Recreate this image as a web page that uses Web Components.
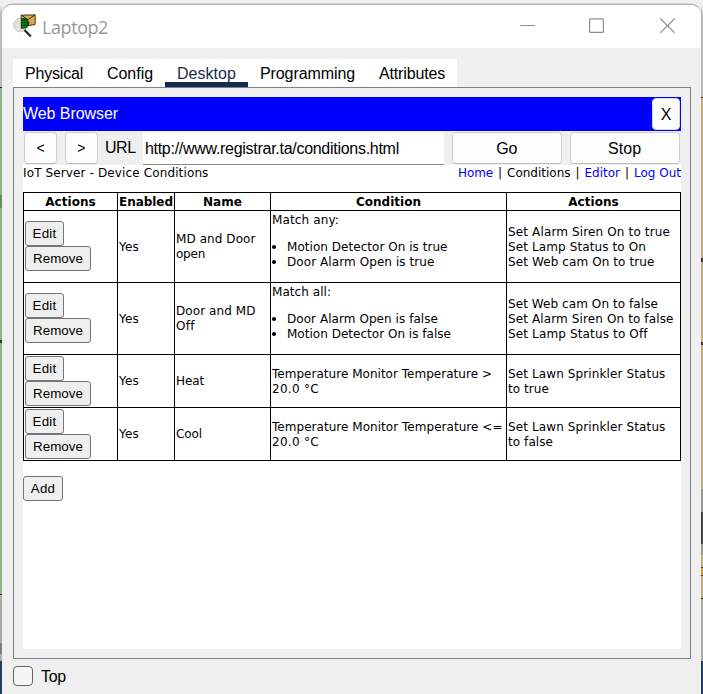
<!DOCTYPE html>
<html lang="en"><head><meta charset="utf-8"><title>Laptop2</title>
<style>
html,body{margin:0;height:694px;overflow:hidden;background:#efefef}
body{font-family:"Liberation Sans",Arial,sans-serif;font-size:16px;color:#000}
</style></head><body>
<desktop-backdrop><laptop-window></laptop-window></desktop-backdrop>
<script>
const define=(name,html)=>customElements.define(name,class extends HTMLElement{
  constructor(){super();this.attachShadow({mode:'open'}).innerHTML=html;}
});

// A single line of text whose tracking is adjusted to the width in its "w" attribute.
customElements.define('fit-text',class extends HTMLElement{
  constructor(){super();this.attachShadow({mode:'open'}).innerHTML='<style>:host{display:block;white-space:nowrap;width:max-content}span{display:inline-block}</style><span><slot></slot></span>';}
  connectedCallback(){
    const w=+this.getAttribute('w');if(!w)return;
    const s=this.shadowRoot.querySelector('span');
    const n=this.textContent.length;
    const d=(w-s.getBoundingClientRect().width)/n;
    s.style.letterSpacing=d.toFixed(4)+'px';
  }
});

define('title-icon',`<style>:host{display:block;width:24px;height:24px}svg{display:block}</style>
<svg width="24" height="24" viewBox="0 0 24 24">
<circle cx="7.5" cy="11" r="6.8" fill="#e4e1dc" stroke="#c2bfba" stroke-width=".8"/>
<path d="M8 1.2 22.2.8V10.6L9 12.5Z" fill="#dba94e" stroke="#33240a" stroke-width=".9"/>
<path d="M8.6 1.4 15 5.6 22 1" fill="none" stroke="#4a330e" stroke-width="1"/>
<path d="M7.8 5Q11 2.8 14.6 5.4L16.4 9Q16 13.4 12.2 14.6L7.8 14.8Z" fill="#073e0b"/>
<path d="M8 7.5h6.5M8 10h7.5M8 12.5h6.5M10.2 4.5v10M12.8 5v9" stroke="#0d8a20" stroke-width=".8"/>
<path d="M11.5 16 17.8 22.4" stroke="#222" stroke-width="2.2"/><path d="M12.6 15.6 14 17" stroke="#aaa"/>
</svg>`);

define('title-bar',`<style>
:host{display:flex;height:43px;background:#fff;color:#999;align-items:flex-start;box-sizing:border-box;padding-left:11px}
title-icon{margin-top:9px}
fit-text{font:18px/24px "Open Sans","Noto Sans",sans-serif;margin:10px 0 0 5px}
svg{display:block;margin-left:auto;margin-right:25px;margin-top:13px}
</style><title-icon></title-icon><fit-text w="66">Laptop2</fit-text>
<svg width="156" height="16" viewBox="0 0 156 16" fill="none" stroke="#8f8f8f" stroke-width="1.2"><path d="M0 7.5h15" stroke-width="1"/><rect x="69.6" y=".8" width="13.8" height="13.6" rx="1"/><path d="m140.3.5 14.4 14.4M154.7.5 140.3 14.9"/></svg>`);

define('tab-item',`<style>:host{display:block;box-sizing:border-box;height:28px;padding:0 12px;line-height:30px}
:host([active]){color:#1b2c4b;border-bottom:5px solid #122a4e}</style><slot></slot>`);

define('tab-strip',`<style>:host{display:flex;width:444px;height:28px;background:#fff;margin-left:11px}
</style>
<tab-item><fit-text w="58">Physical</fit-text></tab-item><tab-item><fit-text w="46">Config</fit-text></tab-item><tab-item active><fit-text w="59">Desktop</fit-text></tab-item><tab-item><fit-text w="95">Programming</fit-text></tab-item><tab-item><fit-text w="66">Attributes</fit-text></tab-item>`);

define('tool-button',`<style>:host{display:flex;align-items:center;justify-content:center;box-sizing:border-box;height:32px;background:#fdfdfd;border:1px solid #cfcfcf;border-bottom-color:#bcbcbc;border-radius:4px}</style><slot></slot>`);

define('form-button',`<style>:host{display:flex;align-items:center;justify-content:center;box-sizing:border-box;height:25px;background:#efefef;border:1px solid #767676;border-radius:3px;font:13.333px/15px "Liberation Sans",Arial,sans-serif;padding-bottom:1px}</style><slot></slot>`);

define('browser-title',`<style>:host{display:flex;height:34px;box-sizing:border-box;background:#00f;color:#fff;justify-content:space-between;align-items:flex-start;padding-right:1px}
.t{line-height:33px}tool-button{width:28px;margin-top:1px;padding-top:2px;color:#000;border-color:#d8d8d8}</style>
<fit-text class="t" w="95">Web Browser</fit-text><tool-button>X</tool-button>`);

define('browser-toolbar',`<style>:host{display:flex;height:34px;box-sizing:border-box;padding:1px 1px 0}
.n{width:33px;font-size:14px}.n+.n{margin-left:8px}
.u{margin-left:7px;line-height:31px}
.f{width:302px;height:33px;box-sizing:border-box;margin:0 8px 0 7px;padding-left:2px;background:#fff;border-bottom:1px solid #888;line-height:33px}
.g,.s{width:110px;padding:2px 1px 0 0}.s{margin-left:8px}
</style><tool-button class="n">&lt;</tool-button><tool-button class="n">&gt;</tool-button><fit-text class="u" w="31">URL</fit-text><div class="f"><fit-text w="254">http://www.registrar.ta/conditions.html</fit-text></div><tool-button class="g"><fit-text w="21">Go</fit-text></tool-button><tool-button class="s"><fit-text w="33">Stop</fit-text></tool-button>`);

define('rule-row',`<style>:host{display:grid;grid-template-columns:94px 57px 96px 236px 174px;height:var(--h)}
div{box-sizing:border-box;border-right:1px solid #000;border-bottom:1px solid #000;padding-left:1px;display:flex;flex-direction:column;justify-content:center}
:host([head]){font-weight:bold}:host([head]) div{align-items:center;padding-left:0}
:host([tall]) .a,:host([tall]) .n,:host([short]) .e,:host([short]) .n{padding-bottom:1px}
</style><div class="a"><slot name="a"></slot></div><div class="e"><slot name="e"></slot></div><div class="n"><slot name="n"></slot></div><div><slot name="c"></slot></div><div><slot name="r"></slot></div>`);

define('row-buttons',`<style>:host{display:flex;flex-direction:column;align-items:flex-start}
.e{width:39px}.r{width:66px}</style><form-button class="e"><fit-text w="24">Edit</fit-text></form-button><form-button class="r"><fit-text w="50">Remove</fit-text></form-button>`);

define('match-list',`<style>:host{display:block;height:71px;box-sizing:border-box;padding-top:1px}
ul{margin:12px 0 0;padding:0;list-style:none}li{display:flex;align-items:center;height:15px}
li::before{content:"";width:4px;height:4px;border-radius:50%;background:#000;margin:1px 11px 0 0}
</style><slot name="t"></slot><ul><li><slot name="1"></slot></li><li><slot name="2"></slot></li></ul>`);

const L=(t,w,s='')=>`<fit-text ${s?`slot="${s}"`:''} w="${w}">${t}</fit-text>`;
const row=(h,n,c,r)=>`<rule-row ${h>60?'tall':'short'} style="--h:${h}px"><row-buttons slot="a"></row-buttons>${L('Yes',20,'e')}<div slot="n">${n}</div><div slot="c">${c}</div><div slot="r">${r}</div></rule-row>`;

define('conditions-page',`<style>:host{display:block;background:#fff;height:484px;font:12px/15px "DejaVu Sans",Verdana,sans-serif}
fit-text{height:15px;line-height:16px}
.top{display:flex;justify-content:space-between;height:27px}nav{display:flex;gap:5px}.l{color:#00f}
.table{border:solid #000;border-width:1px 0 0 1px;width:657px}
form-button.add{width:40px;margin-top:15px}.add fit-text{line-height:15px}
</style>
<div class="top">${L('IoT Server - Device Conditions',185.5)}<nav><fit-text class="l" w="35">Home</fit-text>${L('|',4)}${L('Conditions',63.5)}${L('|',4)}<fit-text class="l" w="35.5">Editor</fit-text>${L('|',4)}<fit-text class="l" w="47">Log Out</fit-text></nav></div>
<div class="table">
<rule-row head style="--h:18px">${L('Actions',50.5,'a')}${L('Enabled',54,'e')}${L('Name',39,'n')}${L('Condition',65,'c')}${L('Actions',50.5,'r')}</rule-row>
${row(72,L('MD and Door',79.5)+L('open',29),`<match-list>${L('Match any:',67,'t')}${L('Motion Detector On is true',160.5,1)}${L('Door Alarm Open is true',147.5,2)}</match-list>`,L('Set Alarm Siren On to true',162)+L('Set Lamp Status to On',138)+L('Set Web cam On to true',146.5))}
${row(72,L('Door and MD',79.5)+L('Off',18.5),`<match-list>${L('Match all:',59,'t')}${L('Door Alarm Open is false',151,1)}${L('Motion Detector On is false',164,2)}</match-list>`,L('Set Web cam On to false',150)+L('Set Alarm Siren On to false',165.5)+L('Set Lamp Status to Off',139.5))}
${row(53,L('Heat',28),L('Temperature Monitor Temperature &gt;',220)+L('20.0 °C',47),L('Set Lawn Sprinkler Status',157.5)+L('to true',41))}
${row(53,L('Cool',26),L('Temperature Monitor Temperature &lt;=',230.5)+L('20.0 °C',47),L('Set Lawn Sprinkler Status',157.5)+L('to false',45))}
</div><form-button class="add">${L('Add',24.5)}</form-button>`);

define('browser-panel',`<style>:host{display:block;box-sizing:border-box;margin:0 10px 0 11px;height:572px;border:1px solid #7d8290;padding:9px}</style>
<browser-title></browser-title><browser-toolbar></browser-toolbar><conditions-page></conditions-page>`);

define('top-check',`<style>:host{display:flex;align-items:center;margin:7px 0 0 11px;height:20px}
i{box-sizing:border-box;width:20px;height:20px;border:1px solid #666;border-radius:4px;background:#f5f5f5;margin-right:8px}fit-text{padding-top:2px}</style><i></i><fit-text w="25">Top</fit-text>`);

define('laptop-window',`<style>:host{display:block;box-sizing:border-box;width:699px;height:691px;background:#efefef;border-radius:10px 10px 6px 6px;box-shadow:0 -1.5px 0 0 #b8b8b8;overflow:hidden}
tab-strip{margin-top:11px}</style><title-bar></title-bar><tab-strip></tab-strip><browser-panel></browser-panel><top-check></top-check>`);

// Slivers of the diagram behind the window show at its left and right edges.
define('desktop-backdrop',`<style>:host{display:block;box-sizing:border-box;height:694px;padding:5px 2px 0;
background:
linear-gradient(#f0f0f0 5px,#b9b9b9 14px,#b9b9b9 87px,#222 87px,#222 88px,#88b588 88px,#88b588 195px,#668c60 195px,#668c60 208px,#88b588 208px,#88b588 340px,#333 340px,#333 343px,#88b588 343px,#88b588 594px,#222 594px,#222 595px,#aaa 595px,#aaa 643px,#7d7d7d 643px,#7d7d7d 654px,#aaa 654px,#aaa 661px,#243b63 661px) 0 0/2px 100% no-repeat,
linear-gradient(#f0f0f0 5px,#b9b9b9 14px,#b9b9b9 97px,#222 97px,#222 98px,#b9b17f 98px,#b9b17f 258px,#333 258px,#333 262px,#b9b17f 262px,#b9b17f 342px,#333 342px,#333 345px,#b9b17f 345px,#b9b17f 489px,#999 489px,#999 512px,#444 512px,#444 544px,#999 544px,#999 555px,#b9b17f 555px,#b9b17f 567px,#433 567px,#433 568px,#d69a30 568px,#d69a30 575px,#433 575px,#433 576px,#b9b17f 576px,#b9b17f 598px,#222 598px,#222 599px,#aaa 599px,#aaa 661px,#243b63 661px) 100% 0/2px 100% no-repeat,#f0f0f0}</style><slot></slot>`);
</script></body></html>
